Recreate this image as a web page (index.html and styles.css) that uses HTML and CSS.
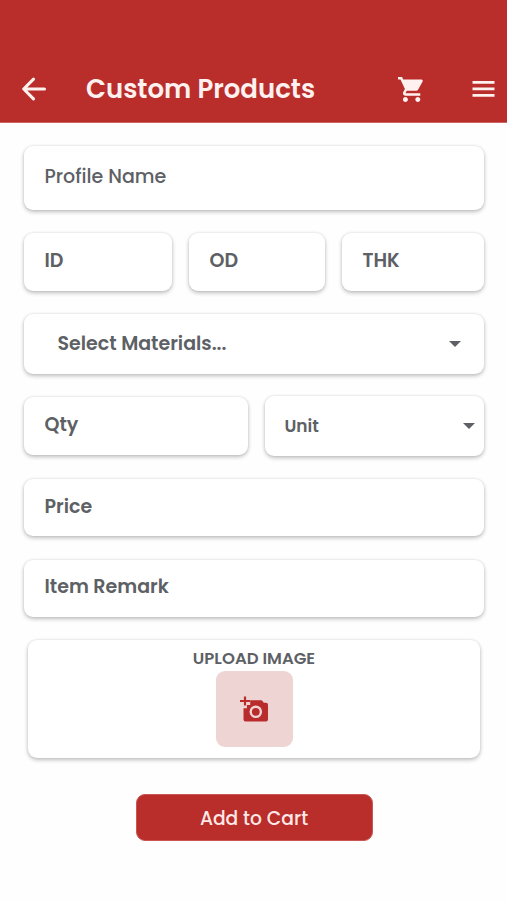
FILE: index.html
```html
<!DOCTYPE html>
<html lang="en">
<head>
<meta charset="utf-8">
<title>Custom Products</title>
<link rel="stylesheet" href="styles.css">
</head>
<body>
<header class="bar">
  <svg class="back" viewBox="0 0 26 26" fill="none" stroke="currentColor" stroke-width="3.1" stroke-linecap="round" stroke-linejoin="round"><path d="M23.500 13H3M12.500 3.200 2.700 13l9.800 9.800"/></svg>
  <h1 class="title">Custom Products</h1>
  <svg class="cart" viewBox="1 2 21 20" fill="currentColor"><path d="M7 18c-1.100 0-1.990.9-1.990 2S5.900 22 7 22s2-.9 2-2-.9-2-2-2zM1 2v2h2l3.600 7.590-1.350 2.450c-.16.280-.25.610-.25.960 0 1.100.9 2 2 2h12v-2H7.420c-.14 0-.25-.11-.25-.25l.03-.12.900-1.630h7.450c.75 0 1.410-.41 1.750-1.030l3.580-6.490A1 1 0 0 0 20 4H5.210l-.94-2H1zm16 16c-1.100 0-1.990.9-1.990 2s.89 2 1.990 2 2-.9 2-2-.9-2-2-2z"/></svg>
  <svg class="menu" viewBox="0 0 22 16" fill="currentColor"><path d="M0 0h22v2.700H0zM0 6.500h22v2.700H0zM0 13h22v2.700H0z"/></svg>
</header>
<main class="form">
  <div class="field profile"><span>Profile Name</span></div>
  <div class="row dims">
    <div class="field"><span>ID</span></div>
    <div class="field"><span>OD</span></div>
    <div class="field"><span>THK</span></div>
  </div>
  <div class="field materials"><span>Select Materials...</span><i class="caret"></i></div>
  <div class="row amount">
    <div class="field qty"><span>Qty</span></div>
    <div class="field unit"><span>Unit</span><i class="caret"></i></div>
  </div>
  <div class="field price"><span>Price</span></div>
  <div class="field remark"><span>Item Remark</span></div>
  <section class="upload">
    <span>UPLOAD IMAGE</span>
    <div class="tile">
      <svg class="camera" viewBox="0 0 28 26"><path fill="#b82d2c" fill-rule="evenodd" d="M3.500 12.200h3.400V9h3.300V4.200h11.500l2.200 2.600H26a2 2 0 0 1 2 2V23.500a2 2 0 0 1-2 2H5.500a2 2 0 0 1-2-2V12.200zM15.800 9.500a6.300 6.300 0 1 0 0 12.600 6.300 6.300 0 0 0 0-12.600zm0 2.400a3.900 3.900 0 1 1 0 7.800 3.900 3.900 0 0 1 0-7.800z"/><path stroke="#b82d2c" stroke-width="2.200" d="M5 .5v9M0 5h10"/></svg>
    </div>
  </section>
  <button class="add"><span>Add to Cart</span></button>
</main>
</body>
</html>
```
FILE: styles.css
```css
* { box-sizing: border-box; }
body {
  margin: 0;
  height: 900px;
  background: #fefefe;
  color: #5d6064;
  font-family: Poppins, Inter, sans-serif;
  font-size: 19px;
  font-weight: 600;
  line-height: 28px;
  overflow: hidden;
}
span, h1 { white-space: nowrap; }
svg { display: block; flex: none; }
.bar {
  display: flex;
  align-items: center;
  height: 123px;
  padding: 56px 12px 0 21px;
  background: #b92d2b;
  border-bottom: 1px solid #cb6462;
  color: #fff1ef;
}
.back { width: 26px; height: 26px; }
.title { margin: 0 0 0 39px; width: 312px; font-size: 26px; font-weight: 600; line-height: 34px; }
.cart { width: 26px; height: 25px; }
.menu { width: 23px; height: 16px; margin-left: auto; }
.form { display: flex; flex-direction: column; padding: 23px 23px 0 24px; }
.field, .upload {
  background: #fff;
  border-radius: 9px;
  box-shadow: 0 2px 4px rgba(0, 0, 0, .24), 0 0 3px rgba(0, 0, 0, .1);
}
.field { display: flex; height: 58px; padding: 14px 0 0 20.5px; }
.row { display: grid; }
.profile { height: 64px; padding-top: 17px; font-weight: 500; }
.dims { grid-template-columns: 148px 136px 142px; gap: 17px; margin-top: 23px; }
.materials { height: 60px; margin-top: 23px; padding: 0 23px 0 33.5px; align-items: center; justify-content: space-between; }
.amount { grid-template-columns: 224px 219px; gap: 17px; margin-top: 22px; align-items: center; }
.unit { height: 60px; padding: 0 9px 0 19.5px; align-items: center; justify-content: space-between; font-size: 17px; }
.caret { border: 6px solid transparent; border-top-color: #5d6064; border-bottom: 0; }
.price { height: 57px; margin-top: 23px; }
.remark { height: 57px; margin-top: 24px; padding-top: 13px; }
.upload { display: flex; flex-direction: column; align-items: center; height: 118px; margin: 23px 4px 0; padding-top: 6px; font-size: 16.5px; line-height: 25px; }
.tile { display: flex; align-items: center; justify-content: center; width: 77px; height: 76px; border-radius: 9px; background: #eed5d4; }
.camera { width: 28px; height: 26px; }
.add { display: flex; align-items: center; justify-content: center; align-self: center; width: 237px; height: 47px; margin-top: 36px; padding: 2px 0 0; border: 1px solid #c95654; border-radius: 9px; background: #b92d2b; color: #ffe8e5; font: 500 18.7px/28px Poppins, Inter, sans-serif; }
```
